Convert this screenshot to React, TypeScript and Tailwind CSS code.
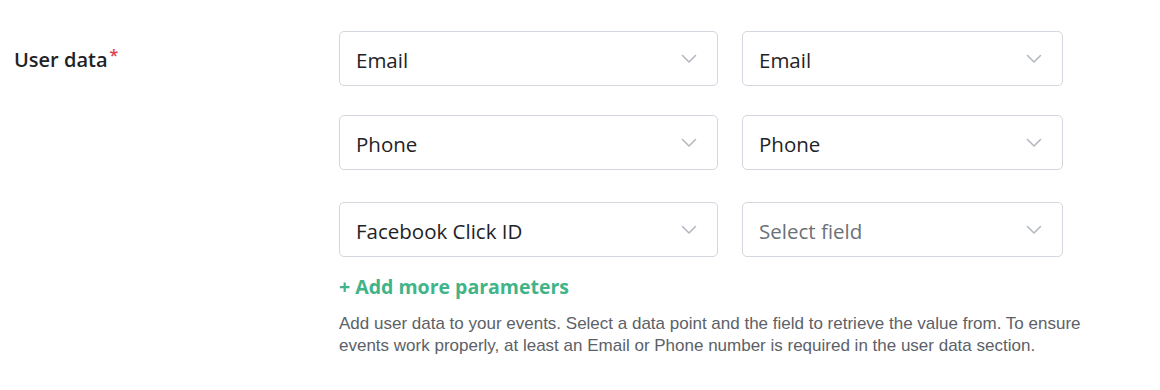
import React from "react";

const Chevron = () => (
  <svg width="16" height="10" viewBox="0 0 16 10" fill="none" className="shrink-0">
    <path d="M1.5 1.5 L8 8 L14.5 1.5" stroke="#b4b9c0" strokeWidth="1.6" strokeLinecap="round" strokeLinejoin="round" />
  </svg>
);

function Select({ value, placeholder, w }: { value?: string; placeholder?: string; w: string }) {
  return (
    <div className={`${w} h-[55px] rounded-[5px] border border-[#d3d8de] bg-white flex items-center justify-between pl-[16px] pr-[20px]`}>
      <span className={`text-[20.5px] pt-[3px] ${value ? "text-[#1f2326]" : "text-[#6b7178]"}`}>{value ?? placeholder}</span>
      <Chevron />
    </div>
  );
}

export default function App() {
  const rows: [string, string | undefined][] = [
    ["Email", "Email"],
    ["Phone", "Phone"],
    ["Facebook Click ID", undefined],
  ];
  return (
    <div className="w-[1160px] h-[390px] bg-white flex" style={{ fontFamily: '"Open Sans", "Noto Sans", sans-serif' }}>
      <div className="w-[339px] pl-[14px] pt-[45px]">
        <div className="text-[20px] font-semibold text-[#1f2326] flex items-start">
          User data<span className="text-[#e03a4a] text-[16px] leading-none ml-[2px] mt-[2px]">*</span>
        </div>
      </div>
      <div className="pt-[31px] flex flex-col">
        <div className="flex flex-col">
          {rows.map(([a, b], i) => (
            <div key={i} className={`flex gap-[24px] ${i === 1 ? "mt-[29px]" : ""} ${i === 2 ? "mt-[32px]" : ""}`}>
              <Select value={a} w="w-[379px]" />
              <Select value={b} placeholder="Select field" w="w-[321px]" />
            </div>
          ))}
        </div>
        <div className="mt-[17px] text-[19.5px] font-bold text-[#3fb489] leading-[26px]">+ Add more parameters</div>
        <div className="mt-[13px] text-[17px] leading-[22px] text-[#5c6168] w-[770px]" style={{ fontFamily: '"Liberation Sans", sans-serif' }}>
          Add user data to your events. Select a data point and the field to retrieve the value from. To ensure events work properly, at least an Email or Phone number is required in the user data section.
        </div>
      </div>
    </div>
  );
}
